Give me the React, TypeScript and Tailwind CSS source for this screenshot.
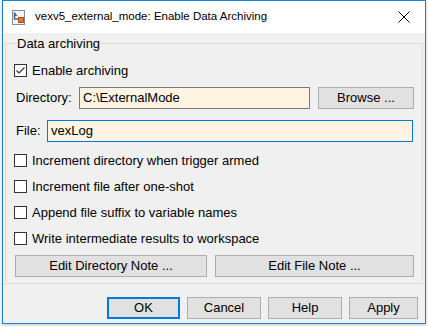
import React from "react";

const font = { fontFamily: '"Segoe UI", "Liberation Sans", Arial, sans-serif' };

const CheckBox = ({ checked, label }: { checked?: boolean; label: string }) => {
  return (
    <div className="flex items-center h-[26px]">
      <div className="w-[13px] h-[13px] border border-[#333333] bg-white flex items-center justify-center">
        {checked && (
          <svg width="11" height="11" viewBox="0 0 11 11">
            <path d="M1.5 5.5 L4 8 L9.5 2.5" fill="none" stroke="#333333" strokeWidth="1.2" />
          </svg>
        )}
      </div>
      <span className="ml-[5px] text-[13px] leading-none text-black">{label}</span>
    </div>
  );
};

const Btn = ({ label, w, primary }: { label: string; w: string; primary?: boolean }) => {
  return (
    <button
      className={`${w} h-[22px] bg-[#e1e1e1] text-[13px] text-black flex items-center justify-center ${
        primary ? "border-2 border-[#0078d7]" : "border border-[#adadad]"
      }`}
    >
      {label}
    </button>
  );
};

const App = () => {
  return (
    <div className="w-[428px] h-[327px] bg-white" style={font}>
      <div className="ml-[2px] w-[424px] h-[324px] border border-[#1883d7] bg-[#f0f0f0] flex flex-col shadow-[0_1px_3px_rgba(0,0,0,0.25)]">
        <div className="h-[32px] bg-white flex items-center pl-[9px] pr-[15px]">
          <svg width="13" height="15" viewBox="0 0 13 15">
            <rect x="0.5" y="0.5" width="12" height="14" fill="#f4f4f4" stroke="#8a8a8a" />
            <path d="M2.5 2.5 L2.5 9 L7 9" fill="none" stroke="#2a6ebb" strokeWidth="1.5" />
            <path d="M2.5 2 L5.5 6 L2.5 6 Z" fill="#2a6ebb" />
            <rect x="6.5" y="7.5" width="5" height="5" fill="#e8761e" stroke="#b24d0a" />
          </svg>
          <span className="ml-[10px] text-[11.5px] text-black">vexv5_external_mode: Enable Data Archiving</span>
          <div className="flex-1" />
          <svg width="12" height="12" viewBox="0 0 12 12">
            <path d="M0.5 0.5 L11.5 11.5 M11.5 0.5 L0.5 11.5" stroke="#000" strokeWidth="1" />
          </svg>
        </div>

        <fieldset className="mx-[2px] mt-[3px] h-[248px] border border-[#dcdcdc] px-[8px] pb-0">
          <legend className="ml-[2px] px-[1px] text-[13px] text-black leading-[15px]">Data archiving</legend>
          <div className="mt-[6px]">
            <CheckBox checked label="Enable archiving" />
          </div>
          <div className="mt-[4px] flex items-center">
            <span className="ml-[2px] w-[63px] text-[13px] text-black">Directory:</span>
            <div className="w-[231px] h-[22px] border border-[#7a7a7a] bg-[#fff4e2] flex items-center px-[3px] text-[13px] text-black">
              C:\ExternalMode
            </div>
            <div className="ml-[8px]">
              <Btn label="Browse ..." w="w-[96px]" />
            </div>
          </div>
          <div className="mt-[11px] flex items-center">
            <span className="ml-[2px] w-[31px] text-[13px] text-black">File:</span>
            <div className="w-[366px] h-[22px] border border-[#0078d7] bg-[#fff4e2] flex items-center px-[3px] text-[13px] text-black">
              vexLog
            </div>
          </div>
          <div className="mt-[5px] flex flex-col">
            <CheckBox label="Increment directory when trigger armed" />
            <CheckBox label="Increment file after one-shot" />
            <CheckBox label="Append file suffix to variable names" />
            <CheckBox label="Write intermediate results to workspace" />
          </div>
          <div className="mt-[4px] flex gap-[8px] ml-[1px]">
            <Btn label="Edit Directory Note ..." w="w-[192px]" />
            <Btn label="Edit File Note ..." w="w-[199px]" />
          </div>
        </fieldset>

        <div className="mt-[13px] flex gap-[7px] pl-[104px]">
          <Btn label="OK" w="w-[73px]" primary />
          <Btn label="Cancel" w="w-[74px]" />
          <Btn label="Help" w="w-[74px]" />
          <Btn label="Apply" w="w-[69px]" />
        </div>
      </div>
    </div>
  );
};

export default App;
